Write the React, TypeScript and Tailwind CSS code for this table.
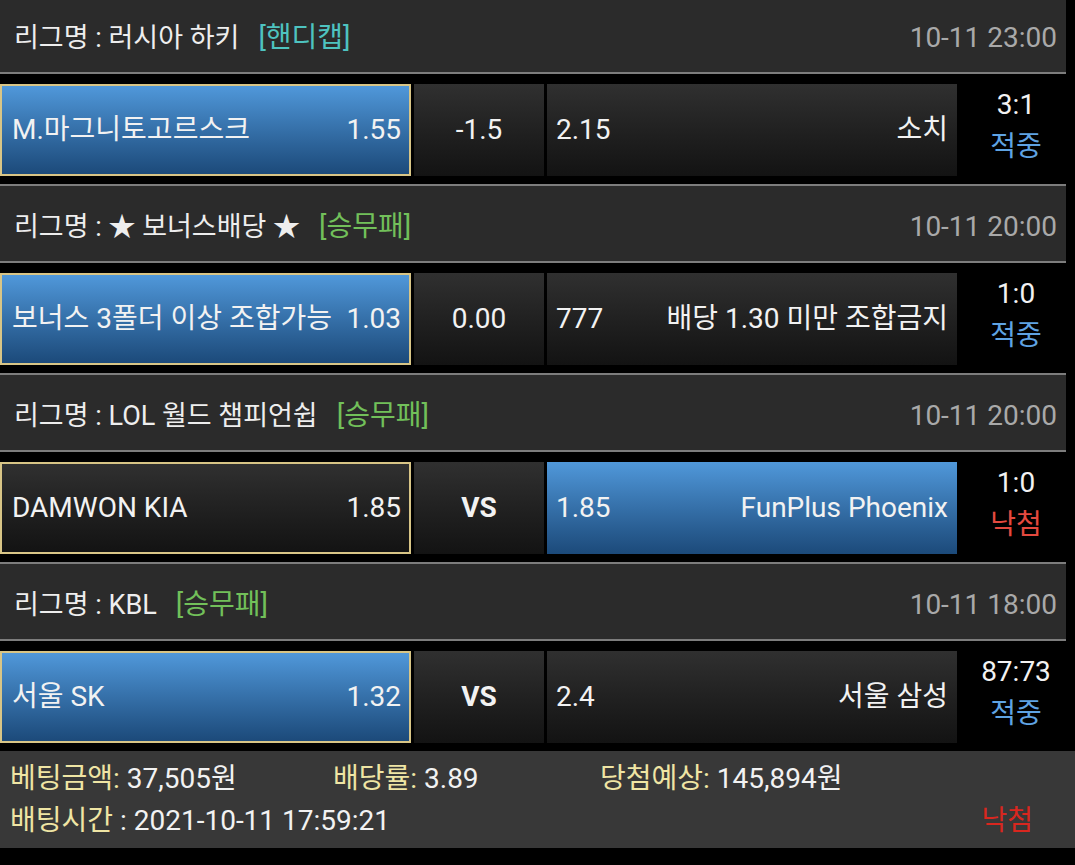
import React from "react";

type Match = {
  league: React.ReactNode;
  tag: string;
  tagColor: string;
  time: string;
  home: string;
  homeOdds: string;
  homeBlue: boolean;
  mid: string;
  midBold?: boolean;
  awayOdds: string;
  away: string;
  awayBlue: boolean;
  score: string;
  result: string;
  resultColor: string;
};

const matches: Match[] = [
  {
    league: "러시아 하키",
    tag: "[핸디캡]",
    tagColor: "text-[#4ec3c0]",
    time: "10-11 23:00",
    home: "M.마그니토고르스크",
    homeOdds: "1.55",
    homeBlue: true,
    mid: "-1.5",
    awayOdds: "2.15",
    away: "소치",
    awayBlue: false,
    score: "3:1",
    result: "적중",
    resultColor: "text-[#5fa3e3]",
  },
  {
    league: "★ 보너스배당 ★",
    tag: "[승무패]",
    tagColor: "text-[#72c05a]",
    time: "10-11 20:00",
    home: "보너스 3폴더 이상 조합가능",
    homeOdds: "1.03",
    homeBlue: true,
    mid: "0.00",
    awayOdds: "777",
    away: "배당 1.30 미만 조합금지",
    awayBlue: false,
    score: "1:0",
    result: "적중",
    resultColor: "text-[#5fa3e3]",
  },
  {
    league: "LOL 월드 챔피언쉽",
    tag: "[승무패]",
    tagColor: "text-[#72c05a]",
    time: "10-11 20:00",
    home: "DAMWON KIA",
    homeOdds: "1.85",
    homeBlue: false,
    mid: "VS",
    midBold: true,
    awayOdds: "1.85",
    away: "FunPlus Phoenix",
    awayBlue: true,
    score: "1:0",
    result: "낙첨",
    resultColor: "text-[#e4493f]",
  },
  {
    league: "KBL",
    tag: "[승무패]",
    tagColor: "text-[#72c05a]",
    time: "10-11 18:00",
    home: "서울 SK",
    homeOdds: "1.32",
    homeBlue: true,
    mid: "VS",
    midBold: true,
    awayOdds: "2.4",
    away: "서울 삼성",
    awayBlue: false,
    score: "87:73",
    result: "적중",
    resultColor: "text-[#5fa3e3]",
  },
];

const blue = "bg-gradient-to-b from-[#5098da] to-[#1c4a7a]";
const dark = "bg-gradient-to-b from-[#303030] to-[#131313]";

function MatchBlock({ m, first }: { m: Match; first: boolean }) {
  return (
    <div className={first ? "-mt-[5px]" : ""}>
      <div className="flex h-[79px] w-[1066px] items-center justify-between border-y-2 border-[#7d7d7d] bg-[#2b2b2b] pl-[14px] pr-[9px] pt-[6px]">
        <div className="whitespace-nowrap text-[#eeeeee]">
          <span className="text-[27px]">리그명 : {m.league}</span>
          <span className={`ml-[19px] ${m.tagColor}`}>{m.tag}</span>
        </div>
        <div className="text-[#a9a9a9]">{m.time}</div>
      </div>
      <div className="mb-[8px] mt-[10px] flex h-[92px] text-[#f2f2f2]">
        <div
          className={`flex w-[411px] items-center justify-between border-2 border-[#d8c586] pl-[10px] pr-[8px] ${
            m.homeBlue ? blue : dark
          }`}
        >
          <span className="whitespace-nowrap">{m.home}</span>
          <span>{m.homeOdds}</span>
        </div>
        <div
          className={`ml-[3px] flex w-[130px] items-center justify-center ${dark} ${
            m.midBold ? "font-bold" : ""
          }`}
        >
          {m.mid}
        </div>
        <div
          className={`ml-[3px] flex w-[410px] items-center justify-between px-[9px] ${
            m.awayBlue ? blue : dark
          }`}
        >
          <span>{m.awayOdds}</span>
          <span className="whitespace-nowrap">{m.away}</span>
        </div>
        <div className="flex flex-1 flex-col items-center justify-center pb-[8px] leading-[42px]">
          <span>{m.score}</span>
          <span className={m.resultColor}>{m.result}</span>
        </div>
      </div>
    </div>
  );
}

export default function App() {
  return (
    <div className="h-[865px] w-[1075px] overflow-hidden bg-black font-[Roboto,'Noto_Sans_CJK_KR',sans-serif] text-[28px] leading-none">
      {matches.map((m, i) => (
        <MatchBlock key={i} m={m} first={i === 0} />
      ))}
      <div className="mt-[8px] h-[97px] bg-[#383838] pl-[10px] pt-[7px] leading-[42px] text-[#f2f2f2]">
        <div className="flex">
          <div className="w-[323px]">
            <span className="text-[#efe5a4]">베팅금액:</span> 37,505원
          </div>
          <div className="w-[267px]">
            <span className="text-[#efe5a4]">배당률:</span> 3.89
          </div>
          <div>
            <span className="text-[#efe5a4]">당첨예상:</span> 145,894원
          </div>
        </div>
        <div className="flex justify-between pr-[42px]">
          <div>
            <span className="text-[#efe5a4]">배팅시간</span> : 2021-10-11 17:59:21
          </div>
          <span className="text-[#d9271f]">낙첨</span>
        </div>
      </div>
    </div>
  );
}
